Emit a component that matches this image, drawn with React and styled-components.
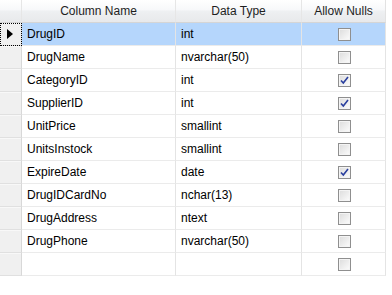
import React from "react";
import styled, { createGlobalStyle } from "styled-components";

const GlobalStyle = createGlobalStyle`
    body {
        margin: 0;
        background: #fff;
        font-family: "Liberation Sans", Arial, sans-serif;
        font-size: 12px;
        color: #000;
    }
`;

const Grid = styled.div`
    display: grid;
    grid-template-columns: 22px 154px 126px 84px;
    width: 386px;
`;

const HeadCell = styled.div`
    height: 22px;
    border-bottom: 1px solid #d5d5d5;
    border-right: 1px solid ${(p) => (p.$last ? "#e2e2e2" : "#e6e6e6")};
    background: linear-gradient(#ffffff 0%, #f7f8fa 45%, #eef0f2 50%, #e8e9eb 100%);
    display: flex;
    align-items: center;
    justify-content: center;
    padding-bottom: 1px;
    box-sizing: border-box;
    height: 23px;
    color: #1e1e1e;
`;

const RowHead = styled.div`
    height: 23px;
    box-sizing: border-box;
    background: #f0f0f0;
    border-bottom: 1px solid #e0e0e0;
    border-right: 1px solid #d8d8d8;
    box-shadow: inset 0 1px 0 #f8f8f8;
    display: flex;
    align-items: center;
    padding-left: 1px;
    position: relative;
    ${(p) =>
        p.$current &&
        `
        outline: 1px dotted #000;
        outline-offset: -1px;
        background: #f0f0f0;
    `}
`;

const Pointer = styled.span`
    width: 0;
    height: 0;
    margin-left: 6px;
    border-top: 5px solid transparent;
    border-bottom: 5px solid transparent;
    border-left: 6px solid #000;
`;

const Cell = styled.div`
    height: 23px;
    box-sizing: border-box;
    border-bottom: 1px solid #ebebeb;
    border-right: 1px solid #e4e4e4;
    background: ${(p) => (p.$selected ? "#b5d6fc" : "#fff")};
    display: flex;
    align-items: center;
    justify-content: ${(p) => (p.$center ? "center" : "flex-start")};
    padding-left: ${(p) => (p.$center ? "0" : "5px")};
    padding-bottom: 1px;
    white-space: nowrap;
    overflow: hidden;
`;

const Box = styled.span`
    width: 13px;
    height: 13px;
    box-sizing: border-box;
    border: 1px solid #8f8f8f;
    box-shadow: inset 0 0 0 1px #f4f4f4;
    background: linear-gradient(135deg, #dcdcdc 0%, #ececec 50%, #fdfdfd 100%);
    display: flex;
    align-items: center;
    justify-content: center;
    margin-left: 2px;
    margin-top: 1px;
`;

const Check = () => (
    <svg width="9" height="9" viewBox="0 0 9 9">
        <path d="M1 4.5 L3.3 7 L8 1" fill="none" stroke="#2a3f9e" strokeWidth="1.6" />
    </svg>
);

const columns = [
    ["DrugID", "int", false],
    ["DrugName", "nvarchar(50)", false],
    ["CategoryID", "int", true],
    ["SupplierID", "int", true],
    ["UnitPrice", "smallint", false],
    ["UnitsInstock", "smallint", false],
    ["ExpireDate", "date", true],
    ["DrugIDCardNo", "nchar(13)", false],
    ["DrugAddress", "ntext", false],
    ["DrugPhone", "nvarchar(50)", false],
    ["", "", false],
];

const App = () => {
    return (
        <>
            <GlobalStyle />
            <Grid>
                <HeadCell />
                <HeadCell>Column Name</HeadCell>
                <HeadCell>Data Type</HeadCell>
                <HeadCell $last>Allow Nulls</HeadCell>
                {columns.map(([name, type, nulls], i) => (
                    <React.Fragment key={i}>
                        <RowHead $current={i === 0}>{i === 0 && <Pointer />}</RowHead>
                        <Cell $selected={i === 0}>{name}</Cell>
                        <Cell $selected={i === 0}>{type}</Cell>
                        <Cell $selected={i === 0} $center>
                            <Box>{nulls && <Check />}</Box>
                        </Cell>
                    </React.Fragment>
                ))}
            </Grid>
        </>
    );
};

export default App;
